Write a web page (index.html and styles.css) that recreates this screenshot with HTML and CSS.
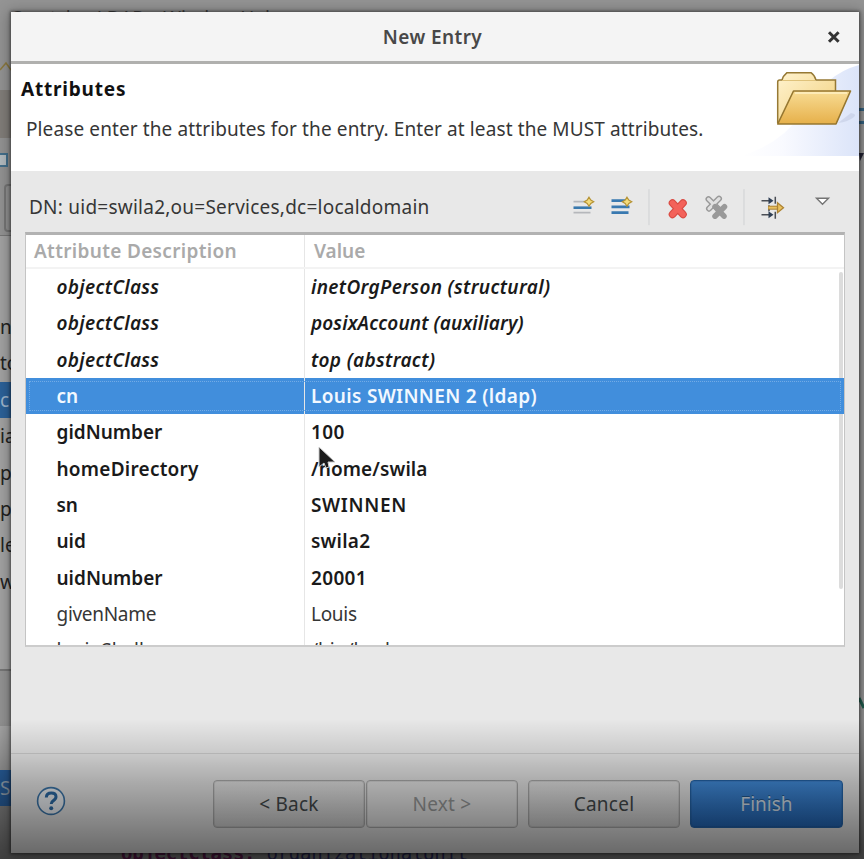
FILE: index.html
```html
<!DOCTYPE html>
<html lang="en">
<head>
<meta charset="utf-8">
<title>New Entry</title>
<link rel="stylesheet" href="styles.css">
</head>
<body>
<div class="desktop">
  <div class="backdrop-top"><span>Scratch – LDAP – Window Help</span></div>
  <svg class="backdrop-pencil" width="12" height="16" viewBox="0 0 12 16"><path d="M0 13L6 6l5 7" fill="none" stroke="#8c7a40" stroke-width="1.500"/></svg>
  <div class="backdrop-tab"></div>
  <div class="backdrop-toggle"></div>
  <div class="backdrop-field"></div>
  <ul class="backdrop-tree">
    <li>n</li><li>to</li><li class="active">c</li><li>ia</li><li>p</li><li>p</li><li>le</li><li>w</li>
  </ul>
  <div class="backdrop-pane"><span>S</span></div>
  <div class="backdrop-code"><b>objectClass:</b> organizationalUnit</div>
  <div class="backdrop-right"><i></i><svg width="5" height="10"><path d="M0 0h5L1 8z" fill="#223"/></svg></div>
  <svg class="backdrop-check" width="5" height="16"><path d="M0 1l5 10" stroke="#1e5b4c" stroke-width="3"/></svg>
</div>

<section class="dialog">
  <header class="titlebar">
    <h1><span class="w4">New Entry</span></h1>
    <svg class="close" width="14" height="14" viewBox="0 0 14 14"><path d="M2 2.200l9.600 9.600M11.600 2.200L2 11.800" stroke="#333" stroke-width="3"/></svg>
  </header>

  <div class="banner">
    <div class="banner-text">
      <h2><span class="w8">Attributes</span></h2>
      <p><span class="w1">Please enter the attributes for the entry. Enter at least the MUST attributes.</span></p>
    </div>
    <svg class="folder" width="118" height="92" viewBox="0 0 118 92">
      <defs>
        <linearGradient id="glow" x1="0" x2="1"><stop offset="0" stop-color="#fff"/><stop offset=".35" stop-color="#f9faff"/><stop offset="1" stop-color="#dbe4f9"/></linearGradient>
        <linearGradient id="back" x1="0" y1="0" x2="1" y2="1"><stop offset="0" stop-color="#fff3cf"/><stop offset="1" stop-color="#f1cf7b"/></linearGradient>
        <linearGradient id="front" x1="0" y1="0" x2="0" y2="1"><stop offset="0" stop-color="#f8dc94"/><stop offset="1" stop-color="#e6b04a"/></linearGradient>
      </defs>
      <path d="M0 92Q40 80 60 50Q84 10 118 1V92z" fill="url(#glow)"/>
      <path d="M97 59l13-10q6 1 3 4-6 5-16 6z" fill="#c3cbe2" opacity=".6"/>
      <path d="M36.700 59V18q0-2 2-2h2.300q1-4 5-7.300h24q3.500 2.300 5 7.300h19.500v11.500" fill="url(#back)" stroke="#967934" stroke-width="1.500"/>
      <path d="M41 16.500h33.500" stroke="#dfc27a"/>
      <path d="M36.700 60L52.500 27H109.500L95 60z" fill="url(#front)" stroke="#967730" stroke-width="1.600" stroke-linejoin="round"/>
      <path d="M54 29h52" stroke="#fff1c4" stroke-width="1.500"/>
    </svg>
  </div>

  <div class="content">
    <div class="dn-row">
      <div class="dn"><span class="w2">DN: uid=swila2,ou=Services,dc=localdomain</span></div>
      <svg class="tools" width="276" height="38" viewBox="-1.500 -1.200 276 38">
        <g fill="none">
          <path d="M13 12.500h17M13 23.500h17" stroke="#b5b7bb" stroke-width="1.800"/><path d="M13 18.500h18" stroke="#3979ad" stroke-width="2.600"/>
          <path d="M51 11.500h17M51 17.700h18M51 23.500h17" stroke="#3979b0" stroke-width="2.800"/>
          <path d="M88.500 0v36M183.500 0v36" stroke="#cfd1d3"/>
          <path d="M112 13.800l10.500 11.400M122.500 13.800l-10.500 11.400" stroke="#d94a42" stroke-width="7.600" stroke-linecap="round"/>
          <path d="M112 13.800l10.500 11.400M122.500 13.800l-10.500 11.400" stroke="#f3625a" stroke-width="5.400" stroke-linecap="round"/>
          <path d="M148 10l10 10M158.500 9.500l-10 10" stroke="#999" stroke-width="6" stroke-linecap="round"/>
          <path d="M148 10l10 10M158.500 9.500l-10 10" stroke="#e0e0e0" stroke-width="3.200" stroke-linecap="round"/>
          <path d="M154.500 17.500l9 9.500M164 17.500l-9.500 9.500" stroke="#999" stroke-width="5.500" stroke-linecap="round"/>
          <path d="M201 11.500h9M201 25.500h9M214.800 7.500v7M214.800 22.500v7M208.500 16v6" stroke="#4a4e55" stroke-width="1.500"/>
          <path d="M208 8l5 3.500-5 3.500zM208 22l5 3.500-5 3.500z" fill="#2f3f55"/>
          <path d="M207.500 18.500h10" stroke="#ad8333" stroke-width="4"/><path d="M208 18.500h10" stroke="#e8c061" stroke-width="2"/>
          <path d="M217 13.500l6 5-6 5z" fill="#e9c15f" stroke="#ad8333" stroke-width="1.300"/>
          <path d="M256 9h12l-6 6z" fill="#fff" stroke="#747474" stroke-width="1.400"/>
        </g>
        <g fill="#f4dc7c" stroke="#b59334" stroke-width="1.200">
          <path d="M28.500 8l1.800 2.800 2.900 1.700-2.900 1.700-1.800 2.800-1.800-2.800-2.900-1.700 2.900-1.700z"/>
          <path d="M66.500 8l1.800 2.800 2.900 1.700-2.900 1.700-1.800 2.800-1.800-2.800-2.900-1.700 2.900-1.700z"/>
        </g>
      </svg>
    </div>

    <div class="table">
      <div class="row head"><div><span class="w3">Attribute Description</span></div><div><span>Value</span></div></div>
      <div class="rows">
        <div class="row must oc"><div><span class="w3">objectClass</span></div><div><span class="w3">inetOrgPerson (structural)</span></div></div>
        <div class="row must oc"><div><span class="w3">objectClass</span></div><div><span class="w1">posixAccount (auxiliary)</span></div></div>
        <div class="row must oc"><div><span class="w3">objectClass</span></div><div><span class="w3">top (abstract)</span></div></div>
        <div class="row must selected"><div><span>cn</span></div><div><span class="w3">Louis SWINNEN 2 (ldap)</span></div></div>
        <div class="row must"><div><span>gidNumber</span></div><div><span class="w4">100</span></div></div>
        <div class="row must"><div><span class="w2">homeDirectory</span></div><div><span class="w1">/home/swila</span></div></div>
        <div class="row must"><div><span>sn</span></div><div><span class="w6">SWINNEN</span></div></div>
        <div class="row must"><div><span>uid</span></div><div><span class="w2">swila2</span></div></div>
        <div class="row must"><div><span>uidNumber</span></div><div><span class="w3">20001</span></div></div>
        <div class="row"><div><span class="n3">givenName</span></div><div><span class="n3">Louis</span></div></div>
        <div class="row"><div><span>loginShell</span></div><div><span>/bin/bash</span></div></div>
      </div>
      <div class="scrollbar"></div>
    </div>
  </div>

  <footer class="footer">
    <svg class="help" width="30" height="30" viewBox="0 0 30 30"><circle cx="15" cy="15" r="13.400" fill="#f2f6fa" stroke="#3d78ad" stroke-width="1.600"/><path d="M10.300 11.500q.2-4.500 5-4.500 4.700 0 4.700 3.800 0 2.200-2.600 3.800-2.200 1.400-2.200 3.400" fill="none" stroke="#2c6ca8" stroke-width="3"/><circle cx="15.200" cy="22.200" r="2" fill="#2c6ca8"/></svg>
    <div class="buttons">
      <button class="btn"><span class="w2">&lt; Back</span></button>
      <button class="btn disabled"><span class="w2">Next &gt;</span></button>
      <button class="btn cancel"><span class="w2">Cancel</span></button>
      <button class="btn primary"><span>Finish</span></button>
    </div>
  </footer>
</section>

<svg class="cursor" width="22" height="28" viewBox="0 0 22 28"><path d="M1 1v20l5-4 2 5 3-1-1-5h7z" fill="#1a1a1a" stroke="#ccc" stroke-width="1"/></svg>
<div class="shade"></div>
</body>
</html>
```
FILE: styles.css
```css
* { box-sizing: border-box; }
body {
  margin: 0;
  width: 864px;
  height: 859px;
  overflow: hidden;
  position: relative;
  font: 19px/24px "Noto Sans", "Open Sans", sans-serif;
  color: #363636;
}
h1, h2, p, ul { margin: 0; padding: 0; list-style: none; }
span { white-space: pre; }

/* tracking steps */
.n3 { letter-spacing: -.3px; }
.w1 { letter-spacing: .11px; }
.w2 { letter-spacing: .24px; }
.w3 { letter-spacing: .33px; }
.w4 { letter-spacing: .42px; }
.w6 { letter-spacing: .65px; }
.w8 { letter-spacing: .8px; }

/* dimmed application window behind the dialog */
.desktop { position: absolute; inset: 0; background: #949494; overflow: hidden; }
.backdrop-top { height: 37px; padding-left: 12px; line-height: 37px; color: #444; }
.backdrop-pencil { position: absolute; left: 0; top: 57px; }
.backdrop-tab { position: absolute; left: 0; top: 90px; width: 11px; height: 48px; background: #827e7a; }
.backdrop-toggle { position: absolute; left: -9px; top: 153px; width: 17px; height: 14px; border: 2px solid #44708c; background: #b4bcc0; }
.backdrop-field { position: absolute; left: 4px; top: 184px; width: 20px; height: 48px; border: 2px solid #777; border-radius: 4px; }
.backdrop-tree { position: absolute; left: 0; top: 235px; width: 12px; height: 436px; padding-top: 73px; background: #a3a3a3; border-top: 1px solid #777; border-bottom: 2px solid #777; }
.backdrop-tree li { height: 36.4px; line-height: 36px; color: #222; }
.backdrop-tree .active { background: #2c629a; color: #9fb6cd; }
.backdrop-pane { position: absolute; left: 0; top: 726px; width: 12px; height: 80px; background: #a8a8a8; padding-top: 44px; }
.backdrop-pane span { display: block; height: 36px; line-height: 36px; background: #2c68ad; color: #abc; }
.backdrop-code { position: absolute; left: 121px; top: 841px; font: 19px/24px "DejaVu Sans Mono", monospace; letter-spacing: -.25px; color: #33336e; white-space: pre; }
.backdrop-code b { color: #70205c; }
.backdrop-right { position: absolute; left: 859px; top: 108px; width: 5px; }
.backdrop-right i { display: block; height: 16px; border: solid #34617f; border-width: 3px 0; margin-bottom: 29px; }
.backdrop-right svg { display: block; }
.backdrop-check { position: absolute; left: 859px; top: 697px; }

.dialog {
  position: absolute;
  left: 11px;
  top: 12px;
  width: 848px;
  height: 841px;
  display: flex;
  flex-direction: column;
  background: #e8e8e8;
  box-shadow: 0 0 3px 1px rgba(0,0,0,.45), 0 2px 14px 2px rgba(0,0,0,.3);
}
.titlebar { height: 52px; display: flex; align-items: center; background: #f4f4f4; border-bottom: 3px solid #b0b0ae; }
.titlebar h1 { flex: 1; text-align: center; padding-left: 27px; font-size: 19px; font-weight: 600; color: #484848; line-height: 50px; }
.close { margin-right: 18px; }
.banner { height: 107px; display: flex; justify-content: space-between; background: #fff; }
.banner h2 { font-size: 19px; font-weight: 700; color: #111; padding: 13px 0 0 10px; }
.banner p { padding: 16px 0 0 15px; }
.folder { margin-left: -20px; }
.content { flex: 1; padding: 17px 14px 0; }
.dn-row { height: 44px; display: flex; }
.dn { width: 534px; padding-left: 4px; line-height: 39px; }
.table { position: relative; height: 415px; background: #fff; border: 1px solid #c4c4c4; border-top: 3px solid #b2b2b2; border-bottom: 2px solid #ccc; overflow: hidden; }
.row { display: flex; height: 36.35px; line-height: 37.4px; }
.row div:first-child { width: 279px; padding-left: 30.5px; border-right: 1px solid #e6e6e6; }
.row div:last-child { padding-left: 6px; }
.row.head { height: 34px; line-height: 33px; border-bottom: 2px solid #f3f3f3; font-weight: 600; color: #aaa; }
.row.head div:first-child { padding-left: 8px; }
.row.head div:last-child { padding-left: 9px; }
.must { font-weight: 600; color: #1a1a1a; }
.oc { font-style: italic; }
.selected { position: relative; z-index: 1; color: #f2f8ff; background: #418edc; outline: 1px dotted #72abe6; outline-offset: -4px; }
.scrollbar { position: absolute; right: 1px; top: 37px; width: 4px; height: 317px; border-radius: 2px; background: #dcdcdc; }

.footer { height: 100px; border-top: 1px solid #d0d0d0; display: flex; justify-content: space-between; padding: 26px 16px 0 25px; }
.help { margin-top: 6px; }
.buttons { display: flex; }
.btn { width: 152px; height: 48px; margin-left: 1px; padding: 0; font: inherit; color: #454b4d; border: 1.5px solid #aeaeae; border-radius: 4px; background: linear-gradient(#e8e8e8, #d6d6d6); box-shadow: inset 0 0 0 1px rgba(0,0,0,.07); }
.btn.disabled { color: #9a9c9c; background: #ebebeb; }
.btn.cancel, .btn.primary { margin-left: 10px; }
.btn.primary { width: 153px; color: #dbe6f2; border-color: #2566ac; background: linear-gradient(#4490e0, #2469bb); text-shadow: 0 -1px #23598f; }

.cursor { position: absolute; left: 318px; top: 446px; }
/* video control shading along the bottom edge */
.shade { position: absolute; left: 0; right: 0; top: 719px; bottom: 0; background: linear-gradient(rgba(0,0,0,0), rgba(0,0,0,.13) 24%, rgba(0,0,0,.27) 46%, rgba(0,0,0,.57)); pointer-events: none; }
```
